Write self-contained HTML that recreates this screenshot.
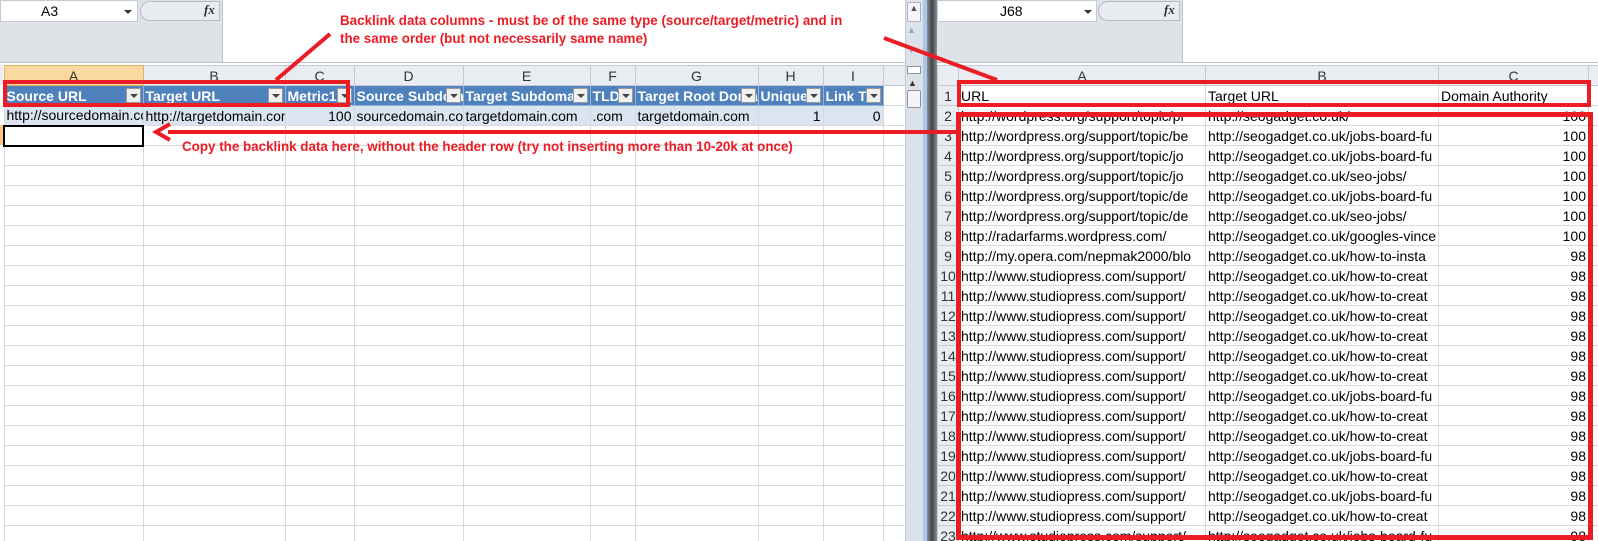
<!DOCTYPE html>
<html><head><meta charset="utf-8"><style>
*{margin:0;padding:0;box-sizing:border-box}
body{width:1598px;height:541px;overflow:hidden;background:#fff;font-family:"Liberation Sans",sans-serif;position:relative}
.abs{position:absolute}
table{border-collapse:collapse;table-layout:fixed}
td{height:20px;border:1px solid #d9d9d9;font-size:14px;white-space:nowrap;overflow:hidden;padding:0 2px;color:#000;line-height:18px}
td.h{background:#e9ecf1;border-color:#c5cbd3;text-align:center;color:#333}
td.r{text-align:right}
.rt{color:#ec1c24;font-weight:bold;font-size:13.4px;white-space:nowrap}
.th{background:#4f81bd;color:#fff;font-weight:bold;border-color:#95b3d7;position:relative;padding-right:18px}
.th i{position:absolute;right:2px;top:2px;width:15px;height:15px;background:#f0f0f0;border:1px solid #9a9a9a}
.th i:after{content:"";position:absolute;left:3px;top:5px;border-left:4px solid transparent;border-right:4px solid transparent;border-top:4px solid #444}
.band td{background:#dbe5f1}
</style></head><body>

<div class="abs" style="left:0;top:0;width:905px;height:63px;background:#dfe3e8;border-bottom:1px solid #b9c0c9"></div>
<div class="abs" style="left:0;top:0;width:138px;height:22px;background:#fff;border:1px solid #c5cbd3;font-size:14px;padding:2px 0 0 40px">A3</div>
<div class="abs" style="left:124px;top:10px;border-left:4px solid transparent;border-right:4px solid transparent;border-top:4px solid #333"></div>
<div class="abs" style="left:140px;top:1px;width:80px;height:20px;border:1px solid #b5bcc6;border-radius:10px 0 0 10px;background:#e8ebef"></div>
<div class="abs" style="left:204px;top:2px;font:italic bold 13px 'Liberation Serif',serif;color:#333">fx</div>
<div class="abs" style="left:222px;top:0;width:683px;height:62px;background:#fff;border-left:1px solid #b9c0c9"></div>

<div class="abs" style="left:0;top:64px;width:905px;height:477px;overflow:hidden;background:#fff">
<div class="abs" style="left:0;top:1px;width:3px;height:20px;background:#e9ecf1"></div>
<div class="abs" style="left:0;top:61px;width:3px;height:20px;background:#f5c77e"></div>
<table class="abs" style="left:3px;top:1px;width:919px">
<colgroup><col style="width:139px"><col style="width:142px"><col style="width:69px"><col style="width:109px"><col style="width:127px"><col style="width:45px"><col style="width:123px"><col style="width:65px"><col style="width:60px"><col style="width:40px"></colgroup>
<tr><td class="h" style="background:#f9d99f;border-color:#e0b060">A</td><td class="h">B</td><td class="h">C</td><td class="h">D</td><td class="h">E</td><td class="h">F</td><td class="h">G</td><td class="h">H</td><td class="h">I</td><td class="h"></td></tr>
<tr><td class="th">Source URL<i></i></td><td class="th">Target URL<i></i></td><td class="th">Metric1<i></i></td><td class="th">Source Subdomain<i></i></td><td class="th">Target Subdomain<i></i></td><td class="th">TLD<i></i></td><td class="th">Target Root Domain<i></i></td><td class="th">Unique<i></i></td><td class="th">Link To<i></i></td><td></td></tr>
<tr class="band"><td>http://sourcedomain.com</td><td>http://targetdomain.com</td><td class="r">100</td><td>sourcedomain.com</td><td>targetdomain.com</td><td>.com</td><td>targetdomain.com</td><td class="r">1</td><td class="r">0</td><td style="background:#fff"></td></tr>
<tr><td style="border:2px solid #000"></td><td></td><td></td><td></td><td></td><td></td><td></td><td></td><td></td><td></td></tr>
<tr><td></td><td></td><td></td><td></td><td></td><td></td><td></td><td></td><td></td><td></td></tr>
<tr><td></td><td></td><td></td><td></td><td></td><td></td><td></td><td></td><td></td><td></td></tr>
<tr><td></td><td></td><td></td><td></td><td></td><td></td><td></td><td></td><td></td><td></td></tr>
<tr><td></td><td></td><td></td><td></td><td></td><td></td><td></td><td></td><td></td><td></td></tr>
<tr><td></td><td></td><td></td><td></td><td></td><td></td><td></td><td></td><td></td><td></td></tr>
<tr><td></td><td></td><td></td><td></td><td></td><td></td><td></td><td></td><td></td><td></td></tr>
<tr><td></td><td></td><td></td><td></td><td></td><td></td><td></td><td></td><td></td><td></td></tr>
<tr><td></td><td></td><td></td><td></td><td></td><td></td><td></td><td></td><td></td><td></td></tr>
<tr><td></td><td></td><td></td><td></td><td></td><td></td><td></td><td></td><td></td><td></td></tr>
<tr><td></td><td></td><td></td><td></td><td></td><td></td><td></td><td></td><td></td><td></td></tr>
<tr><td></td><td></td><td></td><td></td><td></td><td></td><td></td><td></td><td></td><td></td></tr>
<tr><td></td><td></td><td></td><td></td><td></td><td></td><td></td><td></td><td></td><td></td></tr>
<tr><td></td><td></td><td></td><td></td><td></td><td></td><td></td><td></td><td></td><td></td></tr>
<tr><td></td><td></td><td></td><td></td><td></td><td></td><td></td><td></td><td></td><td></td></tr>
<tr><td></td><td></td><td></td><td></td><td></td><td></td><td></td><td></td><td></td><td></td></tr>
<tr><td></td><td></td><td></td><td></td><td></td><td></td><td></td><td></td><td></td><td></td></tr>
<tr><td></td><td></td><td></td><td></td><td></td><td></td><td></td><td></td><td></td><td></td></tr>
<tr><td></td><td></td><td></td><td></td><td></td><td></td><td></td><td></td><td></td><td></td></tr>
<tr><td></td><td></td><td></td><td></td><td></td><td></td><td></td><td></td><td></td><td></td></tr>
<tr><td></td><td></td><td></td><td></td><td></td><td></td><td></td><td></td><td></td><td></td></tr>
</table>
</div>

<div class="abs" style="left:905px;top:0;width:18px;height:541px;background:#dde2ea;border-left:1px solid #c5ccd6"></div>
<div class="abs" style="left:907px;top:2px;width:14px;height:20px;background:#f3f5f8;border:1px solid #aab3bf;border-radius:2px;font-size:9px;text-align:center;color:#555">▲</div>
<div class="abs" style="left:907px;top:25px;font-size:9px;color:#9aa3ae">▲</div>
<div class="abs" style="left:907px;top:45px;font-size:9px;color:#9aa3ae">▼</div>
<div class="abs" style="left:907px;top:66px;width:14px;height:8px;background:#fff;border:1px solid #8a949f"></div>
<div class="abs" style="left:908px;top:78px;font-size:9px;color:#333">▲</div>
<div class="abs" style="left:907px;top:90px;width:14px;height:18px;background:#f3f5f8;border:1px solid #8a949f;border-radius:2px"></div>
<div class="abs" style="left:923px;top:0;width:4px;height:541px;background:#a9c7e8"></div>
<div class="abs" style="left:927px;top:0;width:10px;height:541px;background:linear-gradient(90deg,#8a8f96,#3f4247,#8a8f96)"></div>

<div class="abs" style="left:937px;top:0;width:661px;height:63px;background:#dfe3e8;border-bottom:1px solid #b9c0c9"></div>
<div class="abs" style="left:937px;top:0;width:160px;height:22px;background:#fff;border:1px solid #c5cbd3;font-size:14px;padding:2px 0 0 62px">J68</div>
<div class="abs" style="left:1084px;top:10px;border-left:4px solid transparent;border-right:4px solid transparent;border-top:4px solid #333"></div>
<div class="abs" style="left:1098px;top:1px;width:82px;height:20px;border:1px solid #b5bcc6;border-radius:10px 0 0 10px;background:#e8ebef"></div>
<div class="abs" style="left:1164px;top:2px;font:italic bold 13px 'Liberation Serif',serif;color:#333">fx</div>
<div class="abs" style="left:1182px;top:0;width:416px;height:62px;background:#fff;border-left:1px solid #b9c0c9"></div>

<div class="abs" style="left:937px;top:64px;width:661px;height:477px;overflow:hidden;background:#fff">
<table class="abs" style="left:0;top:1px;width:671px">
<colgroup><col style="width:21px"><col style="width:247px"><col style="width:233px"><col style="width:150px"><col style="width:20px"></colgroup>
<tr><td class="h"></td><td class="h">A</td><td class="h">B</td><td class="h">C</td><td class="h"></td></tr>
<tr><td class="h">1</td><td>URL</td><td>Target URL</td><td>Domain Authority</td><td></td></tr>
<tr><td class="h">2</td><td>http://wordpress.org/support/topic/pr</td><td>http://seogadget.co.uk/</td><td class="r">100</td><td></td></tr>
<tr><td class="h">3</td><td>http://wordpress.org/support/topic/be</td><td>http://seogadget.co.uk/jobs-board-fu</td><td class="r">100</td><td></td></tr>
<tr><td class="h">4</td><td>http://wordpress.org/support/topic/jo</td><td>http://seogadget.co.uk/jobs-board-fu</td><td class="r">100</td><td></td></tr>
<tr><td class="h">5</td><td>http://wordpress.org/support/topic/jo</td><td>http://seogadget.co.uk/seo-jobs/</td><td class="r">100</td><td></td></tr>
<tr><td class="h">6</td><td>http://wordpress.org/support/topic/de</td><td>http://seogadget.co.uk/jobs-board-fu</td><td class="r">100</td><td></td></tr>
<tr><td class="h">7</td><td>http://wordpress.org/support/topic/de</td><td>http://seogadget.co.uk/seo-jobs/</td><td class="r">100</td><td></td></tr>
<tr><td class="h">8</td><td>http://radarfarms.wordpress.com/</td><td>http://seogadget.co.uk/googles-vince</td><td class="r">100</td><td></td></tr>
<tr><td class="h">9</td><td>http://my.opera.com/nepmak2000/blo</td><td>http://seogadget.co.uk/how-to-insta</td><td class="r">98</td><td></td></tr>
<tr><td class="h">10</td><td>http://www.studiopress.com/support/</td><td>http://seogadget.co.uk/how-to-creat</td><td class="r">98</td><td></td></tr>
<tr><td class="h">11</td><td>http://www.studiopress.com/support/</td><td>http://seogadget.co.uk/how-to-creat</td><td class="r">98</td><td></td></tr>
<tr><td class="h">12</td><td>http://www.studiopress.com/support/</td><td>http://seogadget.co.uk/how-to-creat</td><td class="r">98</td><td></td></tr>
<tr><td class="h">13</td><td>http://www.studiopress.com/support/</td><td>http://seogadget.co.uk/how-to-creat</td><td class="r">98</td><td></td></tr>
<tr><td class="h">14</td><td>http://www.studiopress.com/support/</td><td>http://seogadget.co.uk/how-to-creat</td><td class="r">98</td><td></td></tr>
<tr><td class="h">15</td><td>http://www.studiopress.com/support/</td><td>http://seogadget.co.uk/how-to-creat</td><td class="r">98</td><td></td></tr>
<tr><td class="h">16</td><td>http://www.studiopress.com/support/</td><td>http://seogadget.co.uk/jobs-board-fu</td><td class="r">98</td><td></td></tr>
<tr><td class="h">17</td><td>http://www.studiopress.com/support/</td><td>http://seogadget.co.uk/how-to-creat</td><td class="r">98</td><td></td></tr>
<tr><td class="h">18</td><td>http://www.studiopress.com/support/</td><td>http://seogadget.co.uk/how-to-creat</td><td class="r">98</td><td></td></tr>
<tr><td class="h">19</td><td>http://www.studiopress.com/support/</td><td>http://seogadget.co.uk/jobs-board-fu</td><td class="r">98</td><td></td></tr>
<tr><td class="h">20</td><td>http://www.studiopress.com/support/</td><td>http://seogadget.co.uk/how-to-creat</td><td class="r">98</td><td></td></tr>
<tr><td class="h">21</td><td>http://www.studiopress.com/support/</td><td>http://seogadget.co.uk/jobs-board-fu</td><td class="r">98</td><td></td></tr>
<tr><td class="h">22</td><td>http://www.studiopress.com/support/</td><td>http://seogadget.co.uk/how-to-creat</td><td class="r">98</td><td></td></tr>
<tr><td class="h">23</td><td>http://www.studiopress.com/support/</td><td>http://seogadget.co.uk/jobs-board-fu</td><td class="r">98</td><td></td></tr>
</table>
</div>

<div class="abs rt" style="left:340px;top:13px">Backlink data columns - must be of the same type (source/target/metric) and in</div>
<div class="abs rt" style="left:340px;top:31px">the same order (but not necessarily same name)</div>
<div class="abs rt" style="left:182px;top:139px">Copy the backlink data here, without the header row (try not inserting more than 10-20k at once)</div>

<div class="abs" style="left:3px;top:80px;width:347px;height:27px;border:4px solid #ec1c24"></div>
<div class="abs" style="left:957px;top:80px;width:634px;height:27px;border:4px solid #ec1c24"></div>
<div class="abs" style="left:956px;top:112px;width:637px;height:428px;border:5px solid #ec1c24"></div>

<svg class="abs" style="left:0;top:0" width="1598" height="541">
<line x1="330" y1="34" x2="276" y2="80" stroke="#ec1c24" stroke-width="4"/>
<line x1="884" y1="38" x2="997" y2="80" stroke="#ec1c24" stroke-width="4"/>
<line x1="168" y1="132" x2="958" y2="132" stroke="#ec1c24" stroke-width="4"/>
<polyline points="170,124 156,132 170,140" fill="none" stroke="#ec1c24" stroke-width="4"/>
</svg>
</body></html>
